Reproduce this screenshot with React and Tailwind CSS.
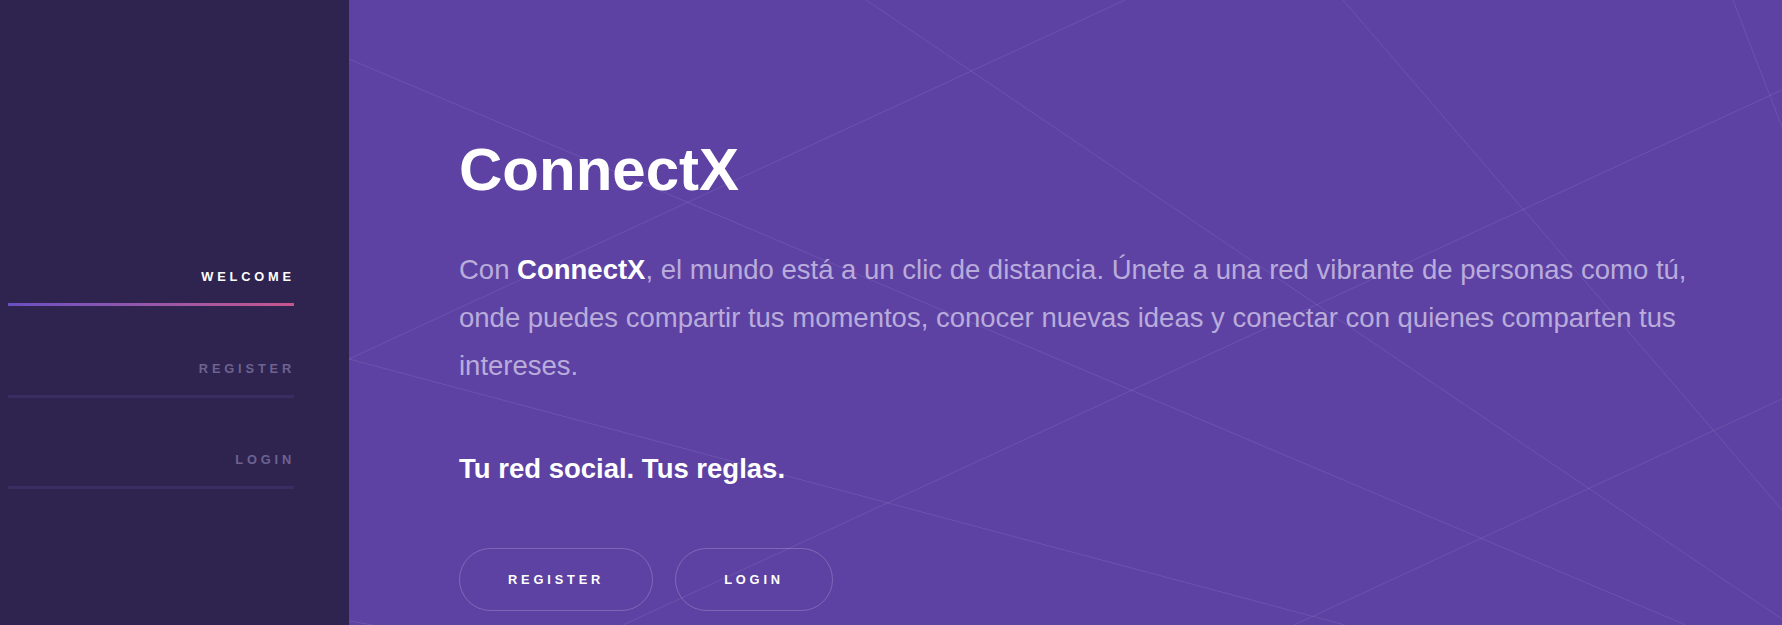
import React from 'react';

const navItems = [
  { label: 'WELCOME', active: true },
  { label: 'REGISTER', active: false },
  { label: 'LOGIN', active: false },
];

// background mesh lines, in main-area coordinates
const lines = [
  [0, 59, 1337, 625],
  [0, 359, 776, 0],
  [0, 359, 996, 625],
  [517, 0, 1433, 619],
  [994, 0, 1433, 510],
  [1384, 0, 1433, 127],
  [1433, 90, 274, 625],
  [1433, 399, 945, 625],
  [0, 621, 24, 625],
];

const Sidebar = () => (
  <aside className="w-[349px] shrink-0 bg-[#2f2450] pt-[269px] pl-2">
    <nav className="flex w-[286px] flex-col gap-[54.5px]">
      {navItems.map((item) => (
        <a key={item.label} href="#" className="flex flex-col">
          <span
            className={`-mr-[1px] text-right text-[12.8px] font-bold leading-4 tracking-[0.3em] ${
              item.active ? 'text-white' : 'text-[#6d6290]'
            }`}
          >
            {item.label}
          </span>
          <span
            className={`mt-[18px] h-[3px] w-full ${
              item.active ? 'bg-gradient-to-r from-[#6a4fc3] to-[#c6558e]' : 'bg-[#3a2d62]'
            }`}
          />
        </a>
      ))}
    </nav>
  </aside>
);

const App = () => {
  return (
    <div className="flex h-[625px] w-full overflow-hidden font-['Liberation_Sans',Arial,sans-serif]">
      <Sidebar />

      <main className="relative flex-1 overflow-hidden bg-[#5d42a4]">
        {/* decorative network lines */}
        <svg
          className="pointer-events-none absolute inset-0 h-full w-full"
          viewBox="0 0 1433 625"
          preserveAspectRatio="none"
        >
          {lines.map(([x1, y1, x2, y2], i) => (
            <line key={i} x1={x1} y1={y1} x2={x2} y2={y2} stroke="rgba(255,255,255,0.09)" strokeWidth="1" />
          ))}
        </svg>

        <div className="relative pl-[110px] pt-[140px]">
          <h1 className="text-6xl font-bold leading-none text-white">ConnectX</h1>

          <p className="mt-[46px] max-w-[1262px] text-[27.5px] leading-[48px] text-[#b9acdb]">
            Con <strong className="font-bold text-white">ConnectX</strong>, el mundo está a un clic de distancia. Únete a una red vibrante de personas como tú, onde puedes compartir tus momentos, conocer nuevas ideas y conectar con quienes comparten tus intereses.
          </p>

          <p className="mt-[59px] text-[27.5px] font-bold leading-10 text-white">Tu red social. Tus reglas.</p>

          <div className="mt-[59px] flex gap-[22px]">
            <button className="flex h-[63px] items-center rounded-full border border-white/20 px-12 text-[12.8px] font-bold leading-4 tracking-[0.3em] text-white">
              REGISTER
            </button>
            <button className="flex h-[63px] items-center rounded-full border border-white/20 px-12 text-[12.8px] font-bold leading-4 tracking-[0.3em] text-white">
              LOGIN
            </button>
          </div>
        </div>
      </main>
    </div>
  );
};

export default App;
